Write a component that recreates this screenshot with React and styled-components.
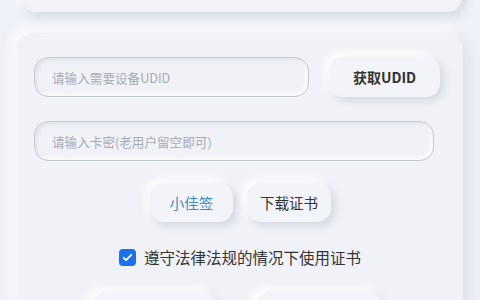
import styled, { createGlobalStyle } from "styled-components";

const GlobalStyle = createGlobalStyle`
  html, body {
    margin: 0;
    padding: 0;
    background: #eef1f7;
    overflow: hidden;
    font-family: "Noto Sans CJK SC", "Noto Sans", sans-serif;
  }
`;

const Page = styled.div`
  width: 480px;
  height: 300px;
  overflow: hidden;
  background: #eef1f7;
`;

const Scroller = styled.div`
  display: flex;
  flex-direction: column;
  gap: 21px;
  margin-top: -30px;
`;

const TopCard = styled.div`
  margin: 0 18px 0 22px;
  height: 42px;
  border-radius: 14px;
  background: #f1f3f8;
  box-shadow: 4px 5px 10px #d6dbe5, -4px -4px 10px #ffffff;
`;

const Card = styled.div`
  margin: 0 17px;
  padding: 24px 23px 30px 17px;
  border-radius: 16px;
  background: #f0f2f7;
  box-shadow: 5px 6px 12px #d8dde7, -5px -5px 12px #fbfcff;
  display: flex;
  flex-direction: column;
`;

const Row = styled.div`
  display: flex;
  align-items: center;
  gap: ${(p) => p.gap || 20}px;
  justify-content: ${(p) => (p.center ? "center" : "flex-start")};
  margin-top: ${(p) => p.top || 0}px;
  margin-left: ${(p) => p.shift || 0}px;
`;

const Input = styled.input`
  box-sizing: border-box;
  width: ${(p) => p.w}px;
  height: 40px;
  border-radius: 14px;
  border: 1px solid #c5c9d0;
  background: #f0f2f7;
  box-shadow: inset 2px 2px 4px #dde1e8, inset -2px -2px 4px #ffffff;
  padding: 0 17px;
  font-family: inherit;
  font-size: 12.6px;
  color: #333;
  outline: none;

  &::placeholder {
    color: #a8abb1;
  }
`;

const Button = styled.button`
  box-sizing: border-box;
  width: ${(p) => p.w}px;
  height: ${(p) => p.h || 40}px;
  border: none;
  border-radius: 14px;
  background: #f2f4f9;
  box-shadow: 4px 4px 8px #d3d8e2, -4px -4px 8px #ffffff;
  font-family: inherit;
  font-size: ${(p) => (p.bold ? 14 : 14.5)}px;
  font-weight: ${(p) => (p.bold ? 700 : 400)};
  color: ${(p) => (p.blue ? "#3b8bc2" : "#333")};
  padding: 0;
  cursor: pointer;
`;

const CheckRow = styled.label`
  display: flex;
  align-items: center;
  justify-content: center;
  gap: 8px;
  margin-top: 24px;
  margin-left: 6px;
  font-size: 15.5px;
  color: #333;
`;

const Box = styled.span`
  width: 17px;
  height: 17px;
  border-radius: 4px;
  background: #1a73e8;
  display: flex;
  align-items: center;
  justify-content: center;
`;

export default function App() {
  return (
    <Page>
      <GlobalStyle />
      <Scroller>
        <TopCard />
        <Card>
          <Row>
            <Input w={275} placeholder="请输入需要设备UDID" />
            <Button w={111} bold>获取UDID</Button>
          </Row>
          <Row top={24}>
            <Input w={400} placeholder="请输入卡密(老用户留空即可)" />
          </Row>
          <Row center gap={14} top={22} shift={7}>
            <Button w={83} h={39} blue>小佳签</Button>
            <Button w={84} h={39}>下载证书</Button>
          </Row>
          <CheckRow>
            <Box>
              <svg width="13" height="13" viewBox="0 0 24 24">
                <path d="M5 12.5l4.5 4.5L19 7" fill="none" stroke="#fff" strokeWidth="3.2" strokeLinecap="round" strokeLinejoin="round" />
              </svg>
            </Box>
            遵守法律法规的情况下使用证书
          </CheckRow>
          <Row center gap={40} top={24}>
            <Button w={124} />
            <Button w={126} />
          </Row>
        </Card>
      </Scroller>
    </Page>
  );
}
